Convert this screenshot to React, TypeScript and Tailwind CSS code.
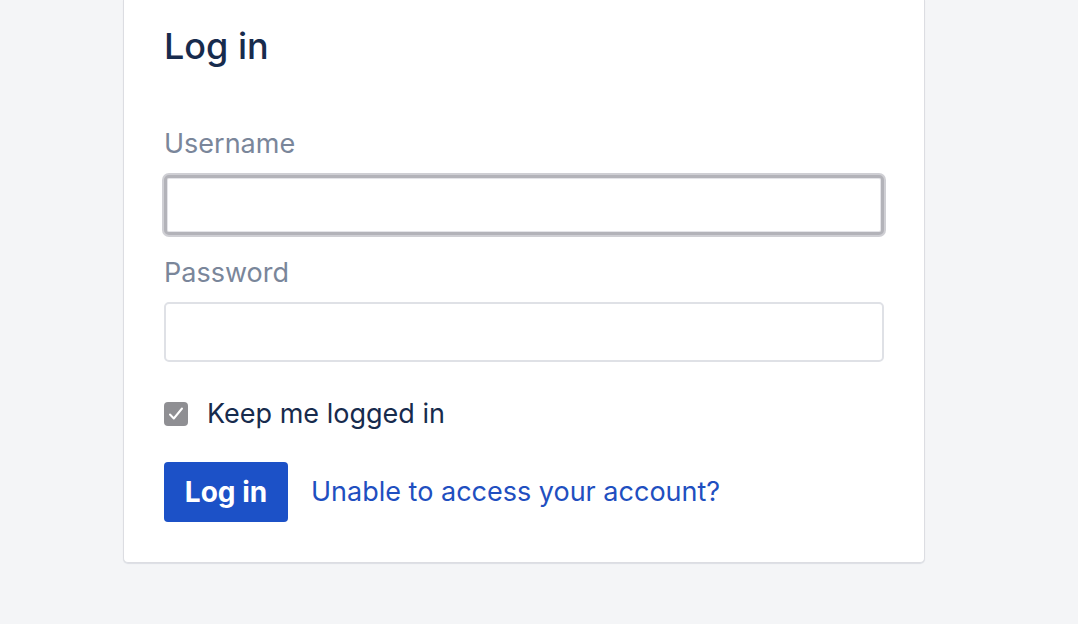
export default function App() {
  return (
    <div
      className="min-h-[624px] bg-[#f4f5f7]"
      style={{ fontFamily: "Inter, 'Noto Sans', sans-serif" }}
    >
      <div className="ml-[123px] w-[802px] rounded-b-[5px] border border-t-0 border-[#dcdde2] bg-white px-[40px] pb-[40px] pt-[22px] shadow-[0_1px_1px_rgba(9,30,66,0.1)]">
        <h1 className="text-[36px] font-medium leading-[48px] text-[#172b4d]">Log in</h1>

        <form className="mt-[58px]">
          <label className="block text-[27px] leading-[32px] text-[#7a869a]">Username</label>
          <input
            type="text"
            className="mt-[15px] block h-[60px] w-[720px] rounded-[5px] border-[3px] border-[#b3b3b9] bg-white px-3 shadow-[0_0_0_2px_#cfcfd4,inset_0_0_0_1px_#e4e4e8] outline-none"
          />
          <label className="mt-[22px] block text-[27px] leading-[32px] text-[#7a869a]">Password</label>
          <input
            type="password"
            className="mt-[13px] block h-[60px] w-[720px] rounded-[5px] border-2 border-[#dfe1e6] bg-white px-3 outline-none"
          />
          <label className="mt-[36px] flex items-center gap-[19px] text-[27px] leading-[32px] text-[#172b4d]">
            <span className="flex h-[24px] w-[24px] items-center justify-center rounded-[4px] bg-[#8f8f93]">
              <svg width="18" height="18" viewBox="0 0 18 18" fill="none">
                <path d="M3 9.5l3.8 4L15 3.5" stroke="white" strokeWidth="2" strokeLinecap="round" strokeLinejoin="round" />
              </svg>
            </span>
            Keep me logged in
          </label>
          <div className="mt-[32px] flex items-center gap-[23px]">
            <button
              type="button"
              className="h-[60px] w-[124px] rounded-[4px] bg-[#1c51c7] text-[28px] font-bold text-white"
            >
              Log in
            </button>
            <a className="text-[27px] leading-[32px] text-[#1f4fc0]" href="#">
              Unable to access your account?
            </a>
          </div>
        </form>
      </div>
    </div>
  );
}
